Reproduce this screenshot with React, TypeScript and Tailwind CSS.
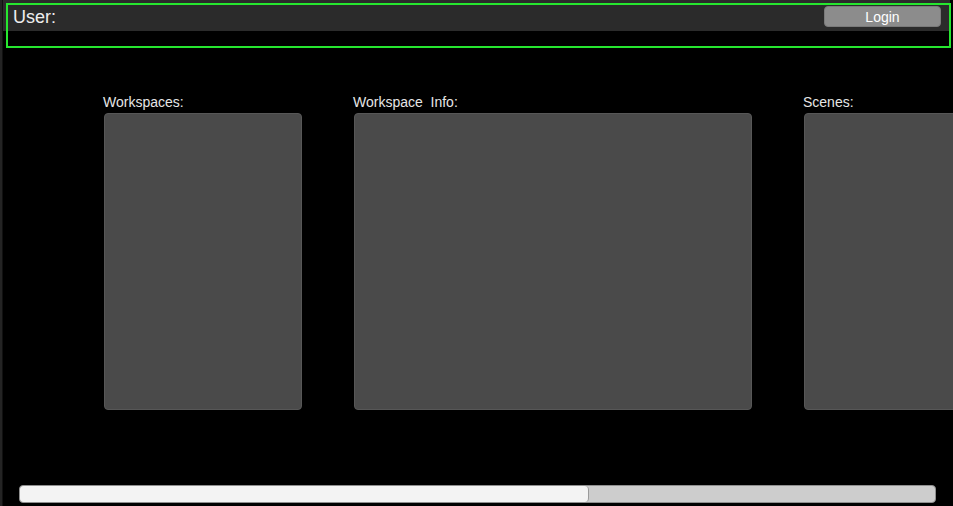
import React from "react";

const font = { fontFamily: '"Liberation Sans", Arial, sans-serif' };

function Panel({ label, width }: { label: string; width: string }) {
  return (
    <div className={`flex flex-col shrink-0 ${width}`}>
      <div className="h-[20px] text-[14px] leading-[16px] text-[#e6e6e6] whitespace-pre -ml-px pt-px">{label}</div>
      <div className="h-[297px] rounded-[4px] bg-[#4a4a4a] border border-[#575757]" />
    </div>
  );
}

export default function App() {
  return (
    <div className="relative w-[953px] h-[506px] bg-black overflow-hidden flex" style={font}>
      <div className="w-[2px] bg-[#242424] shrink-0" />
      <div className="w-px bg-[#111] shrink-0" />
      <div className="flex-1 min-w-0 flex flex-col">
        <div className="h-[31px] bg-[#2b2b2b] flex items-center justify-between pl-[10px] pr-[9px] mr-[3px]">
          <span className="text-[18px] leading-[20px] text-[#eeeeee] pt-[2px]">User:</span>
          <button className="w-[117px] h-[21px] mt-[2px] rounded-[4px] bg-[#8c8c8c] border border-[#7a7a7a] text-white text-[14px] leading-[16px]">
            Login
          </button>
        </div>
        <div className="flex gap-[52px] pl-[101px] pt-[62px] overflow-hidden">
          <Panel label="Workspaces:" width="w-[198px]" />
          <Panel label="Workspace  Info:" width="w-[398px]" />
          <Panel label="Scenes:" width="w-[198px]" />
        </div>
        <div className="mt-[75px] ml-[16px] mr-[17px] h-[18px] rounded-[4px] border border-[#8f8f8f] bg-[#cdcdcd] flex overflow-hidden">
          <div className="w-[569px] h-full bg-[#f3f3f3] rounded-[4px] border-r border-[#9a9a9a]" />
        </div>
      </div>
      <div className="absolute left-[6px] top-[3px] w-[945px] h-[45px] border-2 border-[#26e62f] pointer-events-none" />
    </div>
  );
}
